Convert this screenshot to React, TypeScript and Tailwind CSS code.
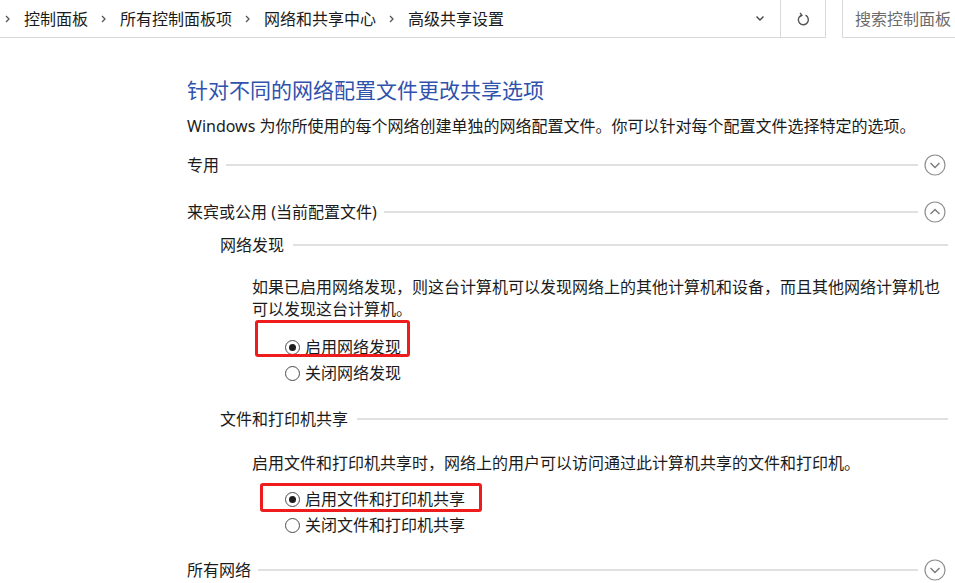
import React from "react";

const font = { fontFamily: '"Noto Sans", "Noto Sans CJK SC", sans-serif' };

function Crumb({ label }: { label: string }) {
  return (
    <span className="flex items-center">
      <svg width="7" height="10" viewBox="0 0 7 10" className="text-[#555]">
        <path d="M2 2 L5 5 L2 8" fill="none" stroke="currentColor" strokeWidth="1.3" />
      </svg>
      <span className="ml-[13px]">{label}</span>
    </span>
  );
}

function CircleChevron({ up }: { up?: boolean }) {
  return (
    <svg width="22" height="22" viewBox="0 0 22 22" className="shrink-0 ml-[6px]">
      <circle cx="11" cy="11" r="10" fill="white" stroke="#8f8f8f" strokeWidth="1.2" />
      <path
        d={up ? "M6.5 13 L11 8.5 L15.5 13" : "M6.5 9 L11 13.5 L15.5 9"}
        fill="none"
        stroke="#7a7a7a"
        strokeWidth="1.4"
      />
    </svg>
  );
}

function Section({ label, up, className }: { label: string; up?: boolean; className: string }) {
  return (
    <div className={`flex items-center h-[26px] ${className}`}>
      <span className="whitespace-nowrap">{label}</span>
      <div className="flex-1 h-[2px] bg-[#e0e0e0] ml-[7px]" />
      <CircleChevron up={up} />
    </div>
  );
}

function SubSection({ label, className }: { label: string; className: string }) {
  return (
    <div className={`flex items-center h-[26px] ml-[33px] ${className}`}>
      <span className="whitespace-nowrap">{label}</span>
      <div className="flex-1 h-[2px] bg-[#e0e0e0] ml-[9px] mr-[-2px]" />
    </div>
  );
}

function Radio({ checked, label }: { checked?: boolean; label: string }) {
  return (
    <div className="flex items-center h-[24px]">
      <span className="w-[15px] h-[15px] rounded-full border-[1.5px] border-[#4a4a4a] bg-white flex items-center justify-center">
        {checked && <span className="w-[7px] h-[7px] rounded-full bg-[#1e1e1e]" />}
      </span>
      <span className="ml-[5px] whitespace-nowrap">{label}</span>
    </div>
  );
}

export default function App() {
  return (
    <div className="w-[955px] h-[583px] overflow-hidden bg-white text-[16px] text-[#1b1b1b]" style={font}>
      {/* address bar */}
      <div className="flex h-[38px]">
        <div className="w-[781px] flex items-center justify-between border-b border-r border-[#d9d9d9] pl-[4px] pr-[15px]">
          <div className="flex items-center gap-[12px] leading-none">
            <Crumb label="控制面板" />
            <Crumb label="所有控制面板项" />
            <Crumb label="网络和共享中心" />
            <Crumb label="高级共享设置" />
          </div>
          <svg width="10" height="7" viewBox="0 0 10 7">
            <path d="M1.5 1.5 L5 5 L8.5 1.5" fill="none" stroke="#444" strokeWidth="1.4" />
          </svg>
        </div>
        <div className="w-[45px] flex items-center justify-center border-b border-r border-[#d9d9d9]">
          <svg width="13" height="14" viewBox="0 0 13 14">
            <path d="M4 3.3 A5 5 0 1 0 8.5 3.2" fill="none" stroke="#555" strokeWidth="1.4" />
            <path d="M3 1 L5 3.4 L2.5 5" fill="none" stroke="#555" strokeWidth="1.3" />
          </svg>
        </div>
        <div className="w-[16px]" />
        <div className="flex-1 flex items-center border-l border-b border-[#d9d9d9] pl-[12px] text-[#6b6b6b] whitespace-nowrap">
          搜索控制面板
        </div>
      </div>

      {/* content */}
      <div className="flex flex-col pl-[187px] pr-[9px]">
        <div className="h-[30px] mt-[37px] flex items-center text-[21px] text-[#2f52ad] whitespace-nowrap leading-none">
          针对不同的网络配置文件更改共享选项
        </div>
        <div className="h-[24px] mt-[9px] flex items-center whitespace-nowrap">
          Windows 为你所使用的每个网络创建单独的网络配置文件。你可以针对每个配置文件选择特定的选项。
        </div>

        <Section label="专用" className="mt-[14px]" />
        <Section label="来宾或公用 (当前配置文件)" up className="mt-[21px]" />

        <SubSection label="网络发现" className="mt-[7px]" />
        <p className="ml-[65px] mt-[18px] leading-[22px] whitespace-nowrap">
          如果已启用网络发现，则这台计算机可以发现网络上的其他计算机和设备，而且其他网络计算机也
          <br />
          可以发现这台计算机。
        </p>
        <div className="relative ml-[98px] mt-[15px]">
          <Radio checked label="启用网络发现" />
          <div className="absolute left-[-30px] top-[-15px] w-[155px] h-[37px] border-[3px] border-[#ee1c1c] rounded-[3px]" />
        </div>
        <div className="ml-[98px] mt-[2px]">
          <Radio label="关闭网络发现" />
        </div>

        <SubSection label="文件和打印机共享" className="mt-[21px]" />
        <p className="ml-[65px] mt-[20px] leading-[22px] whitespace-nowrap">
          启用文件和打印机共享时，网络上的用户可以访问通过此计算机共享的文件和打印机。
        </p>
        <div className="relative ml-[98px] mt-[13px]">
          <Radio checked label="启用文件和打印机共享" />
          <div className="absolute left-[-25px] top-[-4px] w-[222px] h-[29px] border-[3px] border-[#ee1c1c] rounded-[3px]" />
        </div>
        <div className="ml-[98px] mt-[2px]">
          <Radio label="关闭文件和打印机共享" />
        </div>

        <Section label="所有网络" className="mt-[20px]" />
      </div>
    </div>
  );
}
